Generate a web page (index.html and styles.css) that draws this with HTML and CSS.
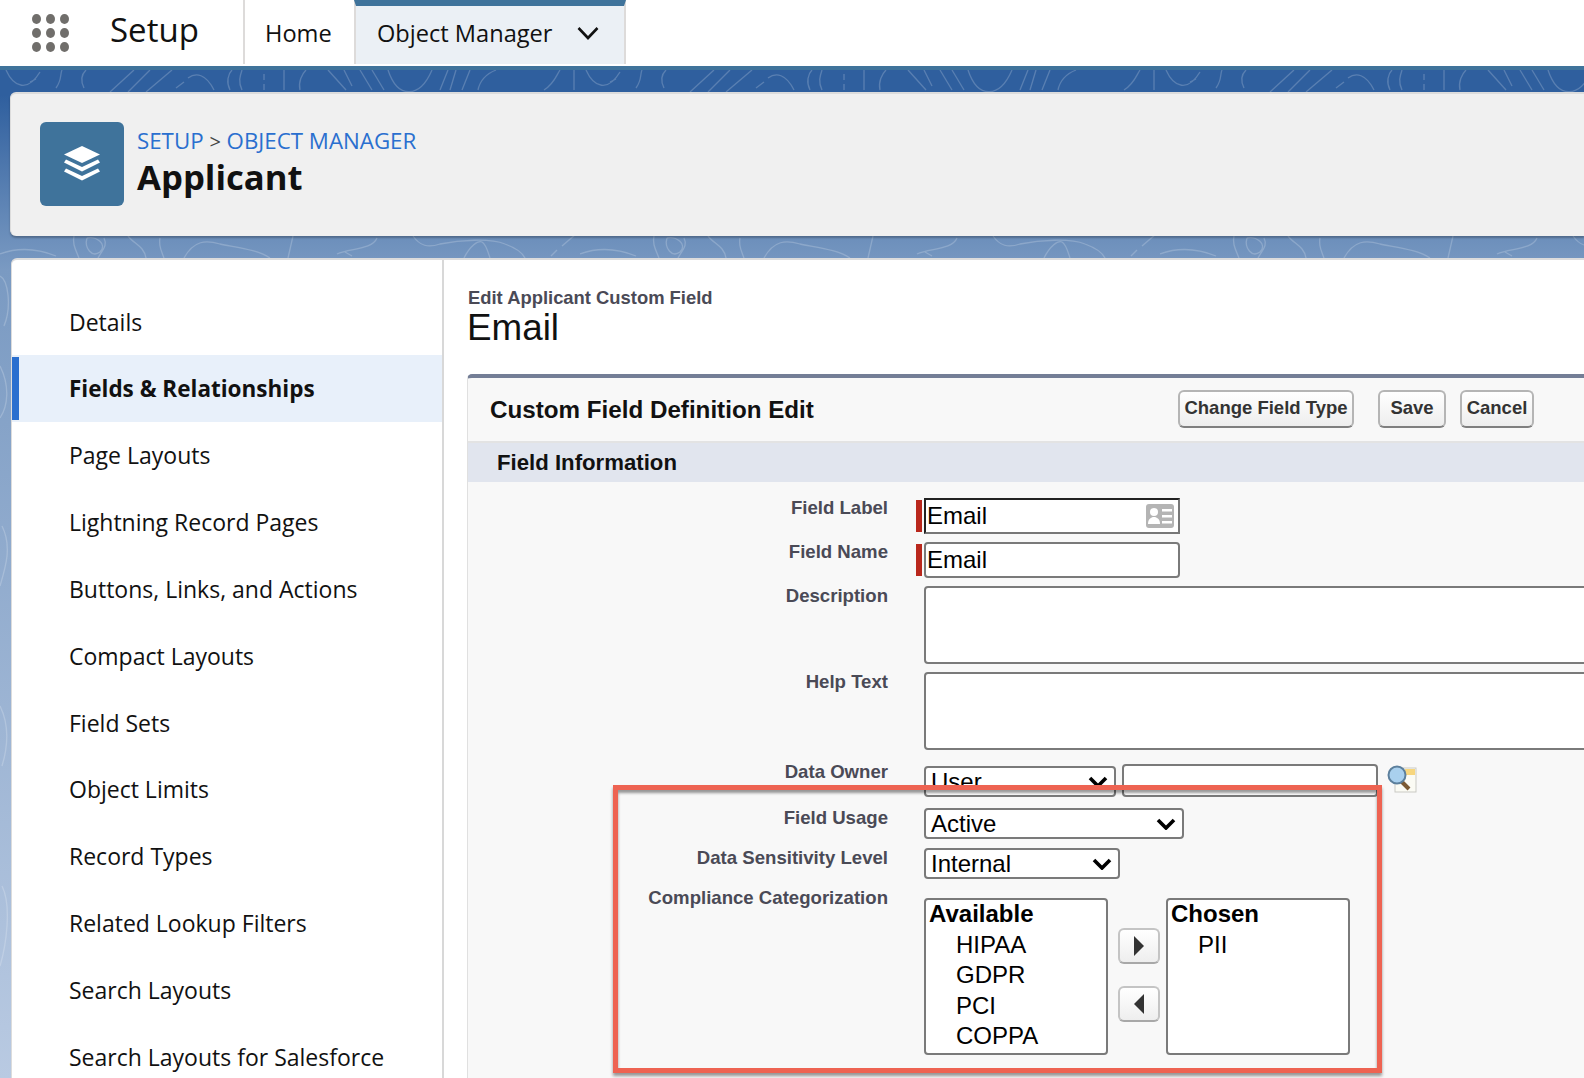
FILE: index.html
```html
<!DOCTYPE html>
<html>
<head>
    <title>Applicant - Custom Field Edit</title>
    <link rel="stylesheet" href="styles.css">
</head>
<body>
    <!-- Topographic lines behind the blue banner -->
    <svg class="banner-lines" width="1584" height="1012" aria-hidden="true">
        <defs>
            <pattern id="topo" x="0" y="0" width="580" height="1012" patternUnits="userSpaceOnUse">
                <g fill="none" stroke="#fff" stroke-opacity="0.2" stroke-width="1.3">
                    <path d="M6 4C14 22 28 26 40 6M30 16l6-3M56 22C62 14 60 8 62 4M84 22C80 14 82 8 86 4"/>
                    <path d="M110 26L134 4M128 26L150 4M146 26L172 4M176 22l8-6M188 12C196 6 206 8 214 24"/>
                    <path d="M230 24C226 16 228 8 232 4M242 24C238 16 240 10 242 4M264 8v6M264 18v6M284 24V4M300 24C298 16 302 8 306 4"/>
                    <path d="M328 4L346 24M344 4L352 20M360 4L372 24M372 4L384 24M388 4C398 34 420 32 432 4M440 24L448 4M450 24L456 4M462 24L470 4M478 24C480 14 486 8 496 4M544 24C554 18 556 10 560 4M574 24V4"/>
                    <path d="M74 170C72 178 76 184 79 192M87 172C84 182 92 192 100 186C108 178 96 170 87 172M98 192C102 184 108 180 104 172M128 170C134 178 144 180 146 192M160 172C158 180 162 186 164 192"/>
                    <path d="M184 192C194 174 206 174 220 178C240 182 258 184 270 192M293 170L288 192M377 172C372 184 350 182 337 188M345 186L352 190M413 170C420 180 428 182 440 178C460 174 490 172 505 178C516 182 522 186 525 192M464 192C470 180 478 174 482 176C486 178 488 186 490 192M551 190l6-6M562 180l14-12"/>
                    <path d="M0 188C16 182 36 182 56 190M0 210C8 214 12 240 4 260M0 300C10 320 8 340 0 352M2 460C12 480 6 500 0 520M0 640C10 660 8 680 2 700M2 820C12 840 6 880 0 900"/>
                </g>
            </pattern>
        </defs>
        <rect width="1584" height="1012" fill="url(#topo)"/>
    </svg>

    <header class="topbar">
        <div class="app-launcher">
            <span></span><span></span><span></span>
            <span></span><span></span><span></span>
            <span></span><span></span><span></span>
        </div>
        <div class="app-name">Setup</div>
        <a class="tab tab-home">Home</a>
        <a class="tab tab-active">
            Object Manager
            <svg class="tab-caret" width="22" height="14" viewBox="0 0 22 14"><path d="M1.5 2L11 12 20.5 2" fill="none" stroke="#111" stroke-width="2.6"/></svg>
        </a>
    </header>

    <section class="object-head">
        <div class="object-icon">
            <svg width="38" height="36" viewBox="0 0 38 36">
                <path d="M19 0L37 8.5 19 17 1 8.5z" fill="#fff"/>
                <path d="M3 13.5L19 21 35 13.5 37 16.5 19 25.5 1 16.5z" fill="#fff"/>
                <path d="M3 22.5L19 30 35 22.5 37 25.5 19 34.5 1 25.5z" fill="#fff"/>
            </svg>
        </div>
        <div class="object-text">
            <div class="crumbs"><a>SETUP</a> <span class="crumb-sep">&gt;</span> <a>OBJECT MANAGER</a></div>
            <h1 class="object-title">Applicant</h1>
        </div>
    </section>

    <div class="workspace">
        <nav class="side-nav">
            <a class="side-item">Details</a>
            <a class="side-item side-item-active">Fields &amp; Relationships</a>
            <a class="side-item">Page Layouts</a>
            <a class="side-item">Lightning Record Pages</a>
            <a class="side-item">Buttons, Links, and Actions</a>
            <a class="side-item">Compact Layouts</a>
            <a class="side-item">Field Sets</a>
            <a class="side-item">Object Limits</a>
            <a class="side-item">Record Types</a>
            <a class="side-item">Related Lookup Filters</a>
            <a class="side-item">Search Layouts</a>
            <a class="side-item">Search Layouts for Salesforce</a>
        </nav>

        <main class="content">
            <div class="page-type">Edit Applicant Custom Field</div>
            <h2 class="page-title">Email</h2>

            <div class="panel">
                <div class="panel-head">
                    <h3 class="panel-title">Custom Field Definition Edit</h3>
                    <button class="btn btn-change">Change Field Type</button>
                    <button class="btn btn-save">Save</button>
                    <button class="btn btn-cancel">Cancel</button>
                </div>
                <div class="section-bar">Field Information</div>

                <div class="form">
                    <div class="row">
                        <label>Field Label</label>
                        <span class="req"></span>
                        <div class="box box-focus">
                            Email
                            <svg class="card-icon" width="28" height="24" viewBox="0 0 28 24">
                                <rect width="28" height="24" rx="3" fill="#b4b4b4"/>
                                <circle cx="8" cy="8" r="4" fill="#fff"/>
                                <path d="M2 20c0-5 3-7 6-7s6 2 6 7z" fill="#fff"/>
                                <path d="M16 5h10v2.500H16zM16 11h10v2.500H16zM16 17h10v2.500H16z" fill="#fff"/>
                            </svg>
                        </div>
                    </div>
                    <div class="row">
                        <label>Field Name</label>
                        <span class="req"></span>
                        <div class="box box-name">Email</div>
                    </div>
                    <div class="row row-desc">
                        <label>Description</label>
                        <span></span>
                        <div class="box box-area"></div>
                    </div>
                    <div class="row row-help">
                        <label>Help Text</label>
                        <span></span>
                        <div class="box box-area"></div>
                    </div>
                    <div class="row row-owner">
                        <label>Data Owner</label>
                        <span></span>
                        <div class="owner-ctl">
                            <div class="pick pick-owner">User
                                <svg class="pick-arrow" width="20" height="12" viewBox="0 0 20 12"><path d="M2 2l8 8 8-8" fill="none" stroke="#000" stroke-width="3.6"/></svg>
                            </div>
                            <div class="box box-lookup"></div>
                            <svg class="lookup-icon" width="30" height="28" viewBox="0 0 30 28">
                                <rect x="8" y="3" width="21" height="24" fill="#fbfbf4" stroke="#c9c9c4"/>
                                <rect x="18" y="4" width="10" height="6" fill="#f7d67e"/>
                                <path d="M14 16l8 8" stroke="#7b5a34" stroke-width="4"/>
                                <circle cx="10" cy="10" r="8.500" fill="#a9d0ee" stroke="#5c7f9c" stroke-width="2"/>
                            </svg>
                        </div>
                    </div>
                    <div class="row row-usage">
                        <label>Field Usage</label>
                        <span></span>
                        <div class="pick pick-usage">Active
                            <svg class="pick-arrow" width="20" height="12" viewBox="0 0 20 12"><path d="M2 2l8 8 8-8" fill="none" stroke="#000" stroke-width="3.6"/></svg>
                        </div>
                    </div>
                    <div class="row row-level">
                        <label>Data Sensitivity Level</label>
                        <span></span>
                        <div class="pick pick-level">Internal
                            <svg class="pick-arrow" width="20" height="12" viewBox="0 0 20 12"><path d="M2 2l8 8 8-8" fill="none" stroke="#000" stroke-width="3.6"/></svg>
                        </div>
                    </div>
                    <div class="row row-level">
                        <label>Compliance Categorization</label>
                        <span></span>
                        <div class="dual">
                            <div class="list">
                                <div class="list-head">Available</div>
                                <div class="list-opt">HIPAA</div>
                                <div class="list-opt">GDPR</div>
                                <div class="list-opt">PCI</div>
                                <div class="list-opt">COPPA</div>
                            </div>
                            <div class="dual-btns">
                                <button class="arrow-btn"><svg width="10" height="20" viewBox="0 0 10 20"><path d="M0 0l10 10L0 20z" fill="#333"/></svg></button>
                                <button class="arrow-btn"><svg width="10" height="20" viewBox="0 0 10 20"><path d="M10 0L0 10l10 10z" fill="#333"/></svg></button>
                            </div>
                            <div class="list">
                                <div class="list-head">Chosen</div>
                                <div class="list-opt">PII</div>
                            </div>
                        </div>
                    </div>
                </div>
            </div>
        </main>
    </div>

    <!-- Red annotation drawn over the screenshot -->
    <div class="callout"></div>
</body>
</html>
```

FILE: styles.css
```css
html, body {
    margin: 0;
    height: 1078px;
    overflow: hidden;
}
body {
    position: relative;
    width: 1584px;
    font-family: "Open Sans", sans-serif;
    color: #111;
    background: linear-gradient(#2f5f9e 0, #2f5f9e 95px, #7a9ac2 270px, #b9cae2 1078px);
}
.banner-lines {
    position: absolute;
    left: 0;
    top: 66px;
}

/* --- Top bar --- */
.topbar {
    position: relative;
    display: flex;
    height: 66px;
    background: #fff;
    border-bottom: 4px solid #3f739b;
    box-sizing: content-box;
}
.app-launcher {
    display: grid;
    grid-template-columns: repeat(3, 9px);
    grid-auto-rows: 10px;
    gap: 4px 5px;
    width: 37px;
    margin: 14px 0 0 32px;
}
.app-launcher span {
    background: #706e6b;
    border-radius: 50%;
}
.app-name {
    width: 133px;
    margin-left: 41px;
    font-size: 33px;
    line-height: 60px;
}
.tab {
    display: flex;
    align-items: center;
    box-sizing: border-box;
    height: 64px;
    font-size: 23.6px;
}
.tab-home {
    width: 111px;
    padding: 2px 0 0 20px;
    border-left: 2px solid #dddbda;
}
.tab-active {
    width: 272px;
    padding: 0 0 4px 21px;
    background: #ebf0f5;
    border-top: 6px solid #3f739b;
    border-left: 2px solid #dddbda;
    border-right: 2px solid #dddbda;
}
.tab-caret {
    margin-left: 25px;
}

/* --- Object header --- */
.object-head {
    position: relative;
    display: flex;
    align-items: center;
    gap: 13px;
    box-sizing: border-box;
    height: 144px;
    margin: 22px 0 0 10px;
    padding: 0 0 2px 29px;
    background: #f0f0f0;
    border-top: 2px solid #dcdcdc;
    border-left: 1px solid #dcdcdc;
    border-radius: 6px 0 0 6px;
    box-shadow: 0 2px 2px rgba(0, 0, 0, 0.25);
}
.object-icon {
    display: flex;
    align-items: center;
    justify-content: center;
    width: 84px;
    height: 84px;
    background: #3f739b;
    border-radius: 6px;
}
.object-text {
    padding-bottom: 6px;
}
.crumbs {
    font-size: 22.3px;
    line-height: 30px;
    color: #444;
}
.crumbs a {
    color: #2a6fcf;
}
.crumb-sep {
    font-size: 20px;
}
.object-title {
    margin: 0;
    font-size: 34.7px;
    font-weight: 700;
    line-height: 40px;
}

/* --- Workspace: side nav + main --- */
.workspace {
    position: relative;
    display: flex;
    margin: 22px 0 0 11px;
    height: 830px;
    background: #fff;
    border-top: 2px solid #dcdcdc;
    border-left: 1px solid #dcdcdc;
    border-radius: 6px 0 0 0;
}
.side-nav {
    box-sizing: border-box;
    flex: 0 0 432px;
    padding-top: 28.5px;
    border-right: 2px solid #d8d8d8;
}
.side-item {
    display: flex;
    align-items: center;
    height: 66.8px;
    padding-left: 57px;
    font-size: 23px;
}
.side-item-active {
    position: relative;
    font-size: 22.5px;
    font-weight: 700;
    background: #e8f0fa;
}
.side-item-active::before {
    content: "";
    position: absolute;
    left: 0;
    top: 2px;
    bottom: 2px;
    width: 7px;
    background: #2a6fcf;
}
.content {
    flex: 1;
    min-width: 0;
    padding: 27px 0 0 23px;
}
.page-type {
    margin-left: 1px;
    font-family: "Liberation Sans", sans-serif;
    font-size: 18.4px;
    font-weight: 700;
    line-height: 21px;
    color: #4a4a56;
}
.page-title {
    margin: 0;
    font-family: "Liberation Sans", sans-serif;
    font-size: 36.8px;
    font-weight: 400;
    line-height: 40px;
}

/* --- Panel --- */
.panel {
    margin-top: 26px;
    font-family: "Liberation Sans", sans-serif;
    background: #f8f8f8;
    border-top: 4px solid #747e96;
    border-left: 1px solid #e0e0e0;
    border-radius: 5px 0 0 0;
    height: 700px;
    overflow: hidden;
}
.panel-head {
    display: flex;
    align-items: center;
    height: 63px;
    border-bottom: 2px solid #e3e3e3;
    padding: 0 50px 0 22px;
}
.panel-title {
    flex: 1;
    margin: 0;
    font-size: 24.2px;
    font-weight: 700;
}
.btn {
    box-sizing: border-box;
    height: 38px;
    margin-bottom: 2px;
    padding: 0 0 2px;
    font: 700 18.5px "Liberation Sans", sans-serif;
    color: #333;
    background: linear-gradient(#fff, #eee);
    border: 2px solid #b5b5b5;
    border-bottom-color: #7f7f7f;
    border-radius: 6px;
}
.btn-change { width: 176px; }
.btn-save { width: 68px; margin-left: 24px; }
.btn-cancel { width: 74px; margin-left: 14px; }
.section-bar {
    height: 39px;
    padding-left: 29px;
    font-size: 22.2px;
    font-weight: 700;
    line-height: 40px;
    background: #e1e5ee;
}

/* --- Form rows --- */
.form {
    padding-top: 16px;
}
.row {
    display: grid;
    grid-template-columns: 448px 8px 1fr;
    margin-bottom: 8px;
}
.row label {
    padding-right: 28px;
    font-size: 18.6px;
    font-weight: 700;
    line-height: 20px;
    text-align: right;
    color: #4a4a56;
}
.req {
    width: 6px;
    height: 32px;
    margin-top: 2px;
    background: #b9271c;
}
.box, .pick, .list {
    box-sizing: border-box;
    background: #fff;
    border: 2px solid #7a7a7a;
    border-radius: 4px;
    font-size: 24px;
    color: #000;
}
.box {
    display: flex;
    align-items: center;
    height: 36px;
    width: 256px;
    padding-left: 1px;
}
.box-focus {
    position: relative;
    border-color: #222 #777 #777 #222;
    border-radius: 0;
}
.card-icon {
    position: absolute;
    right: 4px;
    top: 4px;
}
.box-area {
    width: 800px;
    height: 78px;
}
.row-desc { margin-bottom: 8px; }
.row-help { margin-bottom: 14px; }
.row-owner { margin-bottom: 11px; }
.row-owner label { margin-top: -2px; }
.row-usage, .row-level { margin-bottom: 9px; }
.owner-ctl {
    display: flex;
    align-items: flex-start;
}
.pick {
    display: flex;
    align-items: center;
    justify-content: space-between;
    height: 31px;
    padding: 0 6px 0 5px;
}
.pick-owner {
    width: 192px;
    margin-top: 2px;
}
.pick-usage { width: 260px; }
.pick-level { width: 196px; }
.box-lookup {
    height: 33px;
    margin-left: 6px;
}
.lookup-icon {
    margin: 1px 0 0 9px;
}

/* --- Dual list --- */
.dual {
    display: flex;
    align-items: flex-start;
    margin-top: 10px;
}
.list {
    width: 184px;
    height: 157px;
    line-height: 30.5px;
}
.list-head {
    margin-top: -1px;
    padding-left: 3px;
    font-weight: 700;
}
.list-opt {
    padding-left: 30px;
}
.dual-btns {
    display: flex;
    flex-direction: column;
    gap: 22px;
    width: 42px;
    margin: 30px 6px 0 10px;
}
.arrow-btn {
    display: flex;
    align-items: center;
    justify-content: center;
    box-sizing: border-box;
    height: 36px;
    padding: 0;
    background: linear-gradient(#fff, #eee);
    border: 2px solid #c4c4c4;
    border-bottom-color: #a8a8a8;
    border-radius: 6px;
}

/* --- Annotation --- */
.callout {
    position: absolute;
    left: 613px;
    top: 785px;
    box-sizing: border-box;
    width: 769px;
    height: 288px;
    border: 5px solid #ee6352;
    box-shadow: 0 3px 3px rgba(0, 0, 0, 0.4), inset 0 3px 3px rgba(0, 0, 0, 0.4);
}
```
